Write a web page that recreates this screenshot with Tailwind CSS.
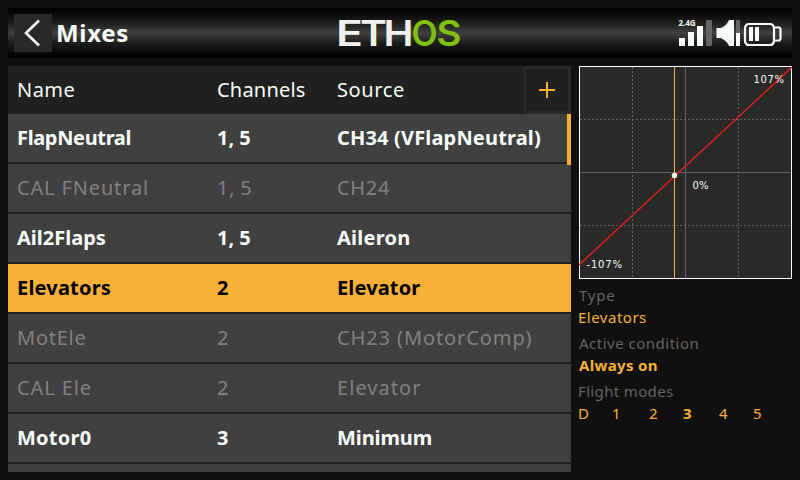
<!DOCTYPE html>
<html lang="en">
<head>
<meta charset="utf-8">
<title>Mixes</title>
<script src="https://cdn.jsdelivr.net/npm/@tailwindcss/browser@4"></script>
</head>
<body class="w-[800px] h-[480px] overflow-hidden bg-[#101010] p-2 font-['Noto_Sans',sans-serif] text-[#f8fcf8]">
<header class="h-[50px] flex items-center justify-between bg-[linear-gradient(to_bottom,#000_0%,#050505_8%,#1c1e1c_30%,#40403f_50%,#1c1e1c_70%,#050505_92%,#000_100%)]">
  <div class="flex items-center w-[329px] pl-[6px]">
    <div class="size-[38px] bg-[#292929]">
      <svg width="38" height="38" fill="none" stroke="#f8fcf8" stroke-width="2.6"><path d="M25 6.500L12 19L25 31.500"/></svg>
    </div>
    <h1 class="ml-[4px] text-[24px] leading-[38px] font-bold tracking-[0.7px]">Mixes</h1>
  </div>
  <svg width="126" height="50" class="mr-auto font-['Inter',sans-serif] font-semibold" font-size="34.500" fill="#f0f0f0">
    <text class="text-[35px]" x="-1" y="38" textLength="27" lengthAdjust="spacingAndGlyphs">E</text>
    <text class="text-[35px]" x="23" y="38" textLength="27" lengthAdjust="spacingAndGlyphs">T</text>
    <text class="text-[35px]" x="46.500" y="38" textLength="30" lengthAdjust="spacingAndGlyphs">H</text>
    <g fill="#80c010">
      <text class="text-[35px]" x="74.500" y="38" textLength="26" lengthAdjust="spacingAndGlyphs">O</text>
      <text class="text-[35px]" x="99.500" y="38" textLength="25" lengthAdjust="spacingAndGlyphs">S</text>
    </g>
  </svg>
  <svg width="114" height="50" fill="#f8fcf8">
    <text x="0.500" y="18" font-size="8" font-weight="700" textLength="17">2.4G</text>
    <path d="M1 30h6v8H1zM10 24h6v14h-6zM19 18h6v20h-6z"/>
    <path fill="#646464" d="M28 12h6v26h-6zM58 12h4v13h-4z"/>
    <path d="M38.500 20h4.500q6-3 8-8h5v26h-5q-2-5-8-8h-4.500z"/>
    <path d="M50 14q-.5 5-5 7" stroke="#bbb" stroke-width=".8" fill="none"/>
    <path d="M58 25h4v13h-4zM71 19h4v14h-4zM77 19h4v14h-4z"/>
    <path fill="none" stroke="#f8fcf8" stroke-width="2.200" d="M71 16h21q3.500 0 4 4v13q-.5 4-4 4H71q-3.500 0-4-4V20q.5-4 4-4zM97 19.500h4.500l1 1.500v10l-1 1.500H97"/>
  </svg>
</header>
<main class="mt-2 flex gap-2">
  <section class="relative w-[563px] h-[406px] overflow-hidden bg-[#202020] text-[20px]">
    <div class="h-12 flex items-center pl-[9px]">
      <span class="w-[200px] tracking-[0.45px]">Name</span><span class="w-[120px] tracking-[0.2px]">Channels</span><span class="flex-1 tracking-[0.6px]">Source</span>
      <div class="w-12 h-12 border-[3px] border-[#292929] flex items-center justify-center">
        <svg width="16" height="16" fill="#f8b038"><path d="M0 7h16v2H0z"/><path d="M7 0h2v16H7z"/></svg>
      </div>
    </div>
    <div class="flex flex-col gap-[2px] *:h-12 *:shrink-0 *:flex *:items-center *:pl-[9px] *:bg-[#404040]">
      <div class="font-bold"><span class="w-[200px] tracking-[-0.35px]">FlapNeutral</span><span class="w-[120px]">1, 5</span><span class="tracking-[0.17px]">CH34 (VFlapNeutral)</span></div>
      <div class="text-[#808080] tracking-[0.45px]"><span class="w-[200px] tracking-[0.85px]">CAL FNeutral</span><span class="w-[120px]">1, 5</span><span class="tracking-[0.7px]">CH24</span></div>
      <div class="font-bold"><span class="w-[200px]">Ail2Flaps</span><span class="w-[120px]">1, 5</span><span class="tracking-[0.25px]">Aileron</span></div>
      <div class="font-bold bg-[#f8b038]! text-black"><span class="w-[200px] tracking-[0.2px]">Elevators</span><span class="w-[120px]">2</span><span class="tracking-[0.15px]">Elevator</span></div>
      <div class="text-[#808080] tracking-[0.45px]"><span class="w-[200px] tracking-[0.75px]">MotEle</span><span class="w-[120px]">2</span><span class="tracking-[0.9px]">CH23 (MotorComp)</span></div>
      <div class="text-[#808080] tracking-[0.45px]"><span class="w-[200px] tracking-[0.9px]">CAL Ele</span><span class="w-[120px]">2</span><span class="tracking-[1.05px]">Elevator</span></div>
      <div class="font-bold"><span class="w-[200px] tracking-[0.25px]">Motor0</span><span class="w-[120px]">3</span><span class="tracking-[-0.1px]">Minimum</span></div>
      <div></div>
    </div>
    <div class="absolute right-0 top-12 w-1 h-[51px] bg-[#f8b038]"></div>
  </section>
  <aside class="w-[213px]">
    <svg width="213" height="213" class="block bg-[#292929] font-['DejaVu_Sans',sans-serif]" fill="none" font-size="10" shape-rendering="crispEdges">
      <path stroke="#646464" d="M0 106.500h213M106.500 0v213"/>
      <path stroke="#646464" stroke-dasharray="2 2" d="M1 53.500h212M1 159.500h212M53.500 1v212M159.500 1v212"/>
      <path stroke="#fff" d="M.5.5h212v212H.5z"/>
      <path stroke="#f8b038" d="M95.500 0v213"/>
      <path stroke="#f02018" stroke-width="1.300" shape-rendering="auto" d="M0 199L213 1"/>
      <circle cx="95.500" cy="109.500" r="2.700" fill="#fff" shape-rendering="auto"/>
      <g fill="#f8fcf8"><text x="174.500" y="17" textLength="30.500">107%</text><text x="113.500" y="123" textLength="16">0%</text><text x="7.500" y="202" textLength="35.500">-107%</text></g>
    </svg>
    <div class="text-[15px] leading-[24px] mt-[4px] text-[#f8b038] tracking-[0.4px]">
      <p class="text-[#646464] tracking-[0.8px]">Type</p>
      <p class="-mt-[2px] -ml-px tracking-[0.5px]">Elevators</p>
      <p class="mt-[2px] text-[#646464] tracking-[0.5px]">Active condition</p>
      <p class="-mt-[2px] font-bold tracking-[0.35px]">Always on</p>
      <p class="mt-[2px] -ml-px text-[#646464] tracking-[0.35px]">Flight modes</p>
      <div class="-mt-[2px] -ml-px grid grid-cols-[34px_37px_34px_36px_34px_20px]"><span>D</span><span>1</span><span>2</span><b>3</b><span>4</span><span>5</span></div>
    </div>
  </aside>
</main>
</body>
</html>
